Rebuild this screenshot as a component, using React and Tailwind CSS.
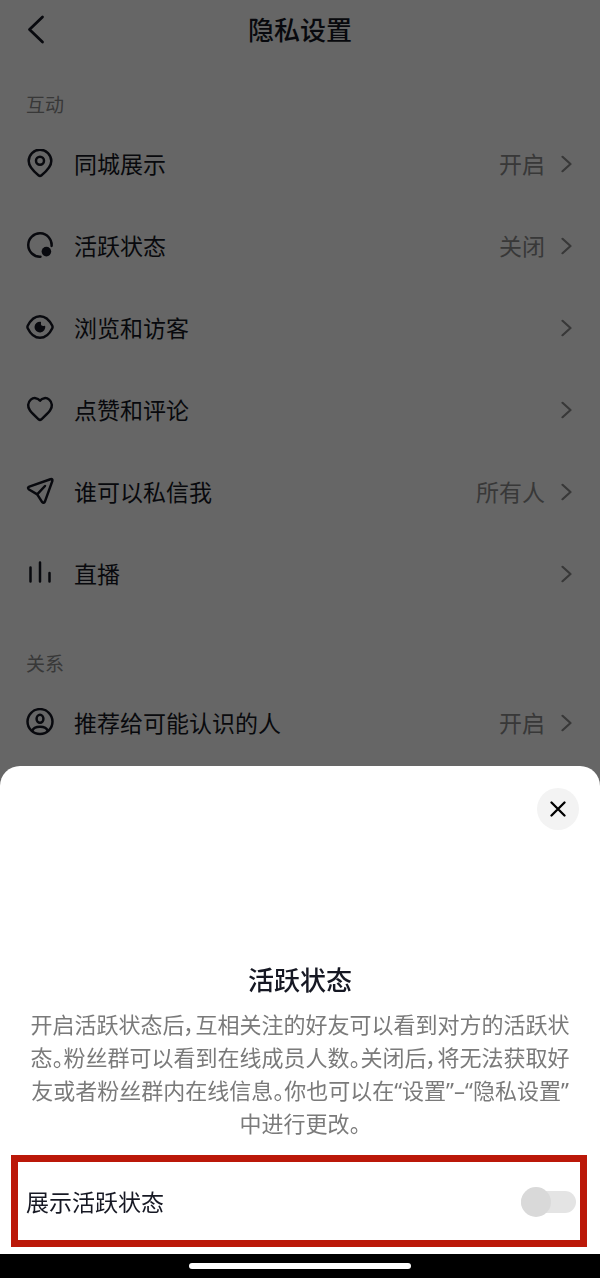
import { useState } from "react";

const icons = {
  pin: (
    <>
      <path d="M13.7 26.4C10.4 23.8 3.7 18 3.7 12A11.3 11.3 0 0 1 26.3 12C26.3 18 19.6 23.8 16.3 26.4Q15 27.4 13.7 26.4Z" />
      <circle cx="15" cy="11.7" r="4" />
    </>
  ),
  status: (
    <>
      <path d="M26.6 15A11.7 11.7 0 1 0 15.5 25.7" />
      <circle cx="21.4" cy="20.6" r="4.8" fill="currentColor" stroke="none" />
    </>
  ),
  eye: (
    <>
      <path d="M2.7 12.8C5.4 7.4 9.8 3.2 15 3.2S24.6 7.4 27.3 12.8Q27.9 14 27.3 15.2C24.6 20.8 20.2 24.8 15 24.8S5.4 20.8 2.7 15.2Q2.1 14 2.7 12.8Z" />
      <path
        d="M15.6 8.7A5.4 5.4 0 1 0 20.2 13Q20.1 12.6 19.6 12.7Q17.6 13.2 16.5 12.4Q15.6 11.4 16 9.4Q16.1 8.8 15.6 8.7Z"
        fill="currentColor"
        stroke="none"
      />
    </>
  ),
  heart: (
    <path d="M15 5.6C12.6 2.7 8.6 2.3 5.8 4.6C2.6 7.3 2.3 12 5 15.6C7.4 18.8 10.8 21.8 13.6 24.3Q15 25.5 16.4 24.3C19.2 21.8 22.6 18.8 25 15.6C27.7 12 27.4 7.3 24.2 4.6C21.4 2.3 17.4 2.7 15 5.6Z" />
  ),
  plane: (
    <>
      <path d="M4.3 9.6L25.4 2.2Q28 1.5 27.3 4.2L20 24.4Q18.8 26.8 17 24.9L12.2 17.4L4 12.5Q1.9 10.8 4.3 9.6Z" />
      <path d="M12.4 17.2L20 9" />
    </>
  ),
  bars: <path d="M5.5 8.5V22.5M15 3.5V22.5M24.5 14V22.5" />,
  person: (
    <>
      <circle cx="15" cy="13.6" r="12.5" />
      <ellipse cx="15" cy="10.8" rx="3.4" ry="4" />
      <path d="M7.4 22.6C9 17.4 21 17.4 22.6 22.6" />
    </>
  ),
};

const sections = [
  {
    title: "互动",
    rows: [
      { icon: "pin", label: "同城展示", value: "开启" },
      { icon: "status", label: "活跃状态", value: "关闭" },
      { icon: "eye", label: "浏览和访客" },
      { icon: "heart", label: "点赞和评论" },
      { icon: "plane", label: "谁可以私信我", value: "所有人" },
      { icon: "bars", label: "直播" },
    ],
  },
  {
    title: "关系",
    rows: [{ icon: "person", label: "推荐给可能认识的人", value: "开启" }],
  },
];

function SettingRow({ icon, label, value }) {
  return (
    <li>
      <button
        type="button"
        className="flex h-[82px] w-full items-center gap-[19px] pr-7 pl-[25px] text-left"
      >
        <svg
          viewBox="0 0 30 30"
          className="size-[30px] shrink-0"
          fill="none"
          stroke="currentColor"
          strokeWidth="2.5"
          strokeLinecap="round"
          strokeLinejoin="round"
          aria-hidden="true"
        >
          {icons[icon]}
        </svg>
        <span className="flex-1 text-[23px] leading-8">{label}</span>
        <span className="flex items-center gap-4 text-[#8c8c8c]">
          {value && <span className="text-[23px] leading-8">{value}</span>}
          <svg
            viewBox="0 0 11 18"
            className="h-[18px] w-[11px]"
            fill="none"
            stroke="currentColor"
            strokeWidth="2.2"
            strokeLinecap="round"
            strokeLinejoin="round"
            aria-hidden="true"
          >
            <path d="M1.5 1.8L9.5 9L1.5 16.2" />
          </svg>
        </span>
      </button>
    </li>
  );
}

function PrivacySettings() {
  return (
    <main>
      <header className="grid h-[60px] grid-cols-[1fr_auto_1fr] items-center px-[26px]">
        <button type="button" aria-label="返回" className="w-5">
          <svg
            viewBox="0 0 20 30"
            className="h-[30px] w-5"
            fill="none"
            stroke="currentColor"
            strokeWidth="2.8"
            strokeLinecap="round"
            strokeLinejoin="round"
            aria-hidden="true"
          >
            <path d="M16.5 2L3.5 14.6L16.5 27" />
          </svg>
        </button>
        <h1 className="text-[26px] leading-8 font-medium">隐私设置</h1>
      </header>

      <div className="flex flex-col gap-1">
        {sections.map((section) => (
          <section key={section.title}>
            <h2 className="px-[26px] pt-[31px] pb-1 text-[19px] leading-7 text-[#8c8c8c]">
              {section.title}
            </h2>
            <ul>
              {section.rows.map((row) => (
                <SettingRow key={row.label} {...row} />
              ))}
            </ul>
          </section>
        ))}
      </div>
    </main>
  );
}

function StatusSheet() {
  const [visible, setVisible] = useState(false);

  return (
    <div
      role="dialog"
      aria-labelledby="sheet-title"
      className="fixed inset-x-0 bottom-0 flex flex-col rounded-t-[20px] bg-white pt-[22px]"
    >
      <button
        type="button"
        aria-label="关闭"
        className="mr-[21px] flex size-[42px] items-center justify-center self-end rounded-full bg-[#f3f3f3] text-black"
      >
        <svg
          viewBox="0 0 16 16"
          className="size-4"
          fill="none"
          stroke="currentColor"
          strokeWidth="2.3"
          strokeLinecap="round"
          aria-hidden="true"
        >
          <path d="M1.5 1.5L14.5 14.5M14.5 1.5L1.5 14.5" />
        </svg>
      </button>

      <h2
        id="sheet-title"
        className="mt-[134px] text-center text-[26px] leading-8 font-medium"
      >
        活跃状态
      </h2>
      <p className="mt-3 px-6 text-center text-[22px] leading-[33px] text-[#7a7a7a] [font-feature-settings:'palt']">
        开启活跃状态后，互相关注的好友可以看到对方的活跃状态。粉丝群可以看到在线成员人数。关闭后，将无法获取好友或者粉丝群内在线信息。你也可以在“设置”–“隐私设置”中进行更改。
      </p>

      <label className="mt-[15px] mr-[13px] mb-[7px] ml-[11px] flex h-[92px] items-center justify-between border-[7px] border-[#bb1809] pt-[2px] pr-1 pl-2">
        <span className="text-[23px] leading-8">展示活跃状态</span>
        <input
          type="checkbox"
          role="switch"
          checked={visible}
          onChange={(e) => setVisible(e.target.checked)}
          className="relative h-[22px] w-[55px] appearance-none rounded-full bg-[#e4e4e4] before:absolute before:-top-1 before:left-0 before:size-[30px] before:rounded-full before:bg-[#d9d9d9] before:content-[''] checked:bg-[#face15] checked:before:left-[25px]"
        />
      </label>

      <div className="flex h-6 items-center justify-center bg-black">
        <span className="h-[6px] w-[37%] rounded-full bg-white" />
      </div>
    </div>
  );
}

export default function App() {
  return (
    <div
      lang="zh-CN"
      className="min-h-screen bg-white font-['Noto_Sans','Noto_Sans_CJK_SC',sans-serif] text-[#161823]"
    >
      <PrivacySettings />
      <div className="fixed inset-0 bg-black/60" />
      <StatusSheet />
    </div>
  );
}
